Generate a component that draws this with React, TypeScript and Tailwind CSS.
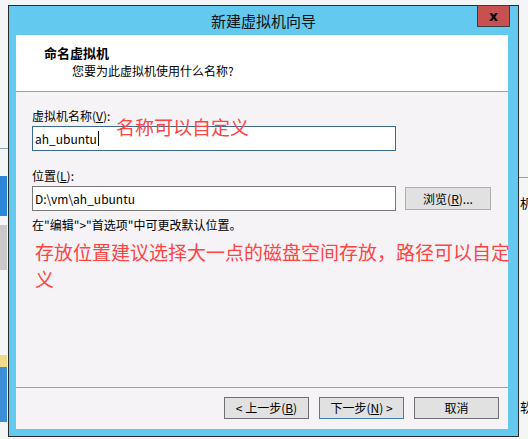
import React from "react";

const ui = { fontFamily: '"Noto Sans CJK SC", "Noto Sans", sans-serif' };

function Btn({ children, primary }: { children: React.ReactNode; primary?: boolean }) {
  return (
    <div
      className={`flex h-[22px] w-[85px] items-center justify-center bg-[#e1e1e1] text-[12px] leading-none text-black border ${
        primary ? "border-[#3c7fb1]" : "border-[#707070]"
      }`}
    >
      {children}
    </div>
  );
}

export default function App() {
  return (
    <div className="relative h-[439px] w-[528px] overflow-hidden bg-[#f4f5f6]" style={ui}>
      {/* desktop fragments around the dialog */}
      <div className="absolute left-0 top-[148px] h-px w-[8px] bg-[#8aa3b8]" />
      <div className="absolute left-0 top-[176px] h-[40px] w-[7px] bg-[#2a88d6]" />
      <div className="absolute left-0 top-[225px] h-[45px] w-[7px] bg-[#c9c9c9]" />
      <div className="absolute left-0 top-[355px] h-[12px] w-[7px] bg-[#f0d98a]" />
      <div className="absolute left-0 top-[367px] h-[55px] w-[7px] bg-[#3a8fd8]" />
      <div className="absolute left-[519px] top-[177px] h-px w-[9px] bg-[#8aa3b8]" />
      <div className="absolute left-[520px] top-[196px] text-[13px] leading-none text-black">机</div>
      <div className="absolute left-[520px] top-[400px] text-[13px] leading-none text-black">软</div>

      {/* dialog window */}
      <div className="relative ml-[8px] mt-[5px] h-[432px] w-[511px] border border-[#2b2b2b] bg-[#63c9ef]">
        <div className="flex h-[29px] items-center justify-center text-[15px] leading-none text-[#111]">
          新建虚拟机向导
        </div>
        <div className="absolute right-[8px] top-[-1px] flex h-[22px] w-[33px] items-center justify-center border border-[#3d3d3d] bg-[#c75050] text-[14px] font-bold leading-none text-black" style={{ fontFamily: '"DejaVu Sans", sans-serif' }}>
          x
        </div>

        {/* client area */}
        <div className="ml-[7px] flex h-[394px] w-[492px] flex-col bg-[#f6f3f7]">
          <div className="h-[57px] border-b border-[#a0a0a0] bg-white">
            <div className="ml-[28px] mt-[9px] text-[13px] font-bold leading-[18px] text-black">命名虚拟机</div>
            <div className="ml-[56px] text-[12px] leading-[18px] text-black">您要为此虚拟机使用什么名称?</div>
          </div>

          <div className="relative flex h-[296px] flex-col border-b border-[#a0a0a0] px-[16px] pt-[15px]">
            <div className="text-[12px] leading-[18px] text-black">
              虚拟机名称(<span className="underline">V</span>):
            </div>
            <div className="mt-[1px] flex h-[25px] w-[364px] items-center border border-[#3d6a90] bg-white px-[2px] text-[12px] text-black">
              ah_ubuntu<span className="ml-px inline-block h-[15px] w-px bg-black" />
            </div>
            <div className="absolute left-[100px] top-[22px] text-[19px] leading-[26px] text-[#ff4444]">名称可以自定义</div>

            <div className="mt-[16px] text-[12px] leading-[18px] text-black">
              位置(<span className="underline">L</span>):
            </div>
            <div className="mt-[1px] flex items-center gap-[9px]">
              <div className="flex h-[25px] w-[364px] items-center border border-[#7a7a7a] bg-white px-[2px] text-[12px] text-black">
                D:\vm\ah_ubuntu
              </div>
              <div className="flex h-[23px] w-[86px] items-center justify-center border border-[#adadad] bg-[#e1e1e1] text-[12px] leading-none text-black">
                浏览(<span className="underline">R</span>)...
              </div>
            </div>
            <div className="mt-[5px] text-[12px] leading-[18px] text-black">在"编辑"&gt;"首选项"中可更改默认位置。</div>
            <div className="ml-[3px] mt-[4px] w-[475px] text-[19px] leading-[27px] text-[#ff4444]">
              存放位置建议选择大一点的磁盘空间存放，路径可以自定义
            </div>
          </div>

          <div className="flex flex-1 items-start justify-end gap-[10px] pr-[9px] pt-[9px]">
            <Btn>
              &lt; 上一步(<span className="underline">B</span>)
            </Btn>
            <Btn primary>
              下一步(<span className="underline">N</span>) &gt;
            </Btn>
            <Btn>取消</Btn>
          </div>
        </div>
      </div>
    </div>
  );
}
